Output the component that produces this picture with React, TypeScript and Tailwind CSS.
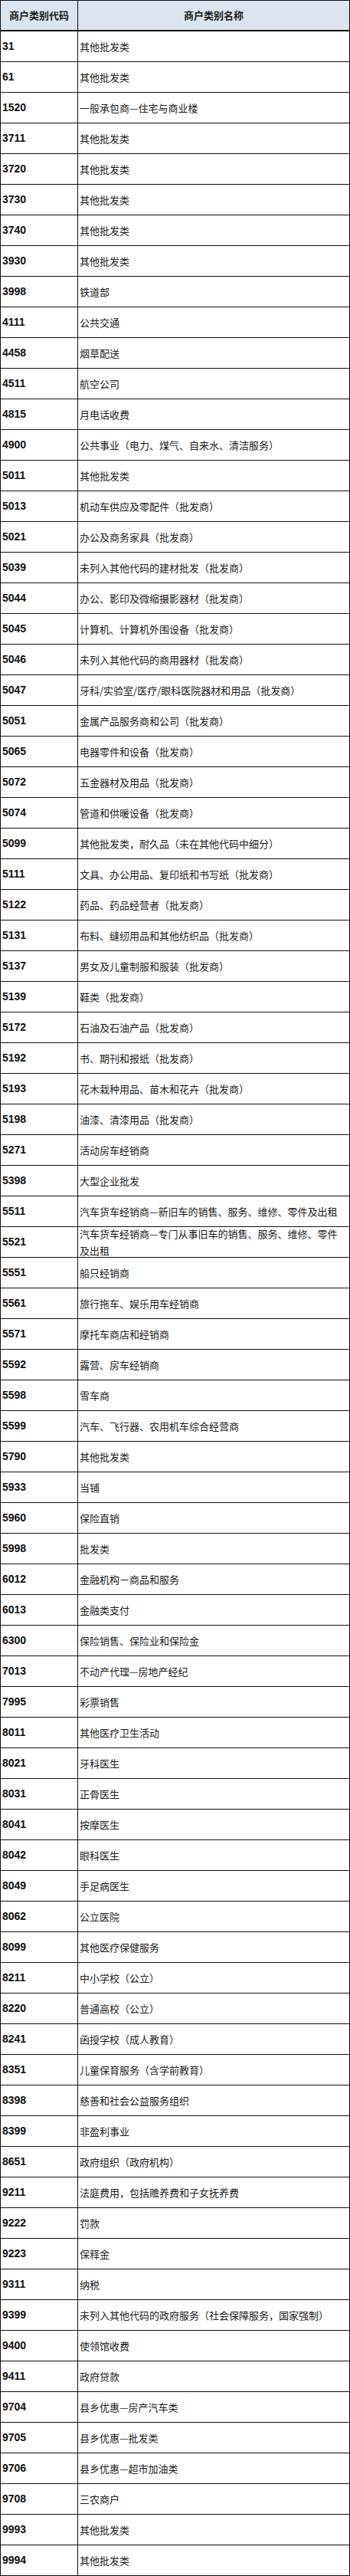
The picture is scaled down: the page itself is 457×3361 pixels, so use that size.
const rows: [string, string][] = [
  ['31', '其他批发类'],
  ['61', '其他批发类'],
  ['1520', '一般承包商—住宅与商业楼'],
  ['3711', '其他批发类'],
  ['3720', '其他批发类'],
  ['3730', '其他批发类'],
  ['3740', '其他批发类'],
  ['3930', '其他批发类'],
  ['3998', '铁道部'],
  ['4111', '公共交通'],
  ['4458', '烟草配送'],
  ['4511', '航空公司'],
  ['4815', '月电话收费'],
  ['4900', '公共事业（电力、煤气、自来水、清洁服务）'],
  ['5011', '其他批发类'],
  ['5013', '机动车供应及零配件（批发商）'],
  ['5021', '办公及商务家具（批发商）'],
  ['5039', '未列入其他代码的建材批发（批发商）'],
  ['5044', '办公、影印及微缩摄影器材（批发商）'],
  ['5045', '计算机、计算机外围设备（批发商）'],
  ['5046', '未列入其他代码的商用器材（批发商）'],
  ['5047', '牙科/实验室/医疗/眼科医院器材和用品（批发商）'],
  ['5051', '金属产品服务商和公司（批发商）'],
  ['5065', '电器零件和设备（批发商）'],
  ['5072', '五金器材及用品（批发商）'],
  ['5074', '管道和供暖设备（批发商）'],
  ['5099', '其他批发类，耐久品（未在其他代码中细分）'],
  ['5111', '文具、办公用品、复印纸和书写纸（批发商）'],
  ['5122', '药品、药品经营者（批发商）'],
  ['5131', '布料、缝纫用品和其他纺织品（批发商）'],
  ['5137', '男女及儿童制服和服装（批发商）'],
  ['5139', '鞋类（批发商）'],
  ['5172', '石油及石油产品（批发商）'],
  ['5192', '书、期刊和报纸（批发商）'],
  ['5193', '花木栽种用品、苗木和花卉（批发商）'],
  ['5198', '油漆、清漆用品（批发商）'],
  ['5271', '活动房车经销商'],
  ['5398', '大型企业批发'],
  ['5511', '汽车货车经销商—新旧车的销售、服务、维修、零件及出租'],
  ['5521', '汽车货车经销商—专门从事旧车的销售、服务、维修、零件及出租'],
  ['5551', '船只经销商'],
  ['5561', '旅行拖车、娱乐用车经销商'],
  ['5571', '摩托车商店和经销商'],
  ['5592', '露营、房车经销商'],
  ['5598', '雪车商'],
  ['5599', '汽车、飞行器、农用机车综合经营商'],
  ['5790', '其他批发类'],
  ['5933', '当铺'],
  ['5960', '保险直销'],
  ['5998', '批发类'],
  ['6012', '金融机构－商品和服务'],
  ['6013', '金融类支付'],
  ['6300', '保险销售、保险业和保险金'],
  ['7013', '不动产代理—房地产经纪'],
  ['7995', '彩票销售'],
  ['8011', '其他医疗卫生活动'],
  ['8021', '牙科医生'],
  ['8031', '正骨医生'],
  ['8041', '按摩医生'],
  ['8042', '眼科医生'],
  ['8049', '手足病医生'],
  ['8062', '公立医院'],
  ['8099', '其他医疗保健服务'],
  ['8211', '中小学校（公立）'],
  ['8220', '普通高校（公立）'],
  ['8241', '函授学校（成人教育）'],
  ['8351', '儿童保育服务（含学前教育）'],
  ['8398', '慈善和社会公益服务组织'],
  ['8399', '非盈利事业'],
  ['8651', '政府组织（政府机构）'],
  ['9211', '法庭费用，包括赡养费和子女抚养费'],
  ['9222', '罚款'],
  ['9223', '保释金'],
  ['9311', '纳税'],
  ['9399', '未列入其他代码的政府服务（社会保障服务，国家强制）'],
  ['9400', '使领馆收费'],
  ['9411', '政府贷款'],
  ['9704', '县乡优惠—房产汽车类'],
  ['9705', '县乡优惠—批发类'],
  ['9706', '县乡优惠—超市加油类'],
  ['9708', '三农商户'],
  ['9993', '其他批发类'],
  ['9994', '其他批发类'],
];

export default function App() {
  return (
    <div className="w-[457px] bg-white text-[#1c1c1c] border-t border-l border-r border-[#111]">
      {/* cabecera */}
      <div className="flex h-[40px] bg-[#dbe4ef] border-b-2 border-[#111] font-['Noto_Sans_CJK_SC',sans-serif] text-[13px] font-bold">
        <div className="w-[101px] shrink-0 border-r border-[#111] flex items-center justify-center">商户类别代码</div>
        <div className="flex-1 flex items-center justify-center">商户类别名称</div>
      </div>
      {rows.map(([code, name]) => (
        <div key={code} className="flex h-[40px] border-b border-[#111]">
          <div className="w-[101px] shrink-0 border-r border-[#111] flex items-center pl-[2px] font-['Liberation_Sans',Arial,sans-serif] text-[14px] font-bold text-[#111]">
            {code}
          </div>
          <div className="flex-1 min-w-0 flex items-center pl-[2px] pr-[6px] font-['Noto_Sans_CJK_SC',sans-serif] text-[13px] leading-[22px]">
            <span>{name}</span>
          </div>
        </div>
      ))}
    </div>
  );
}
